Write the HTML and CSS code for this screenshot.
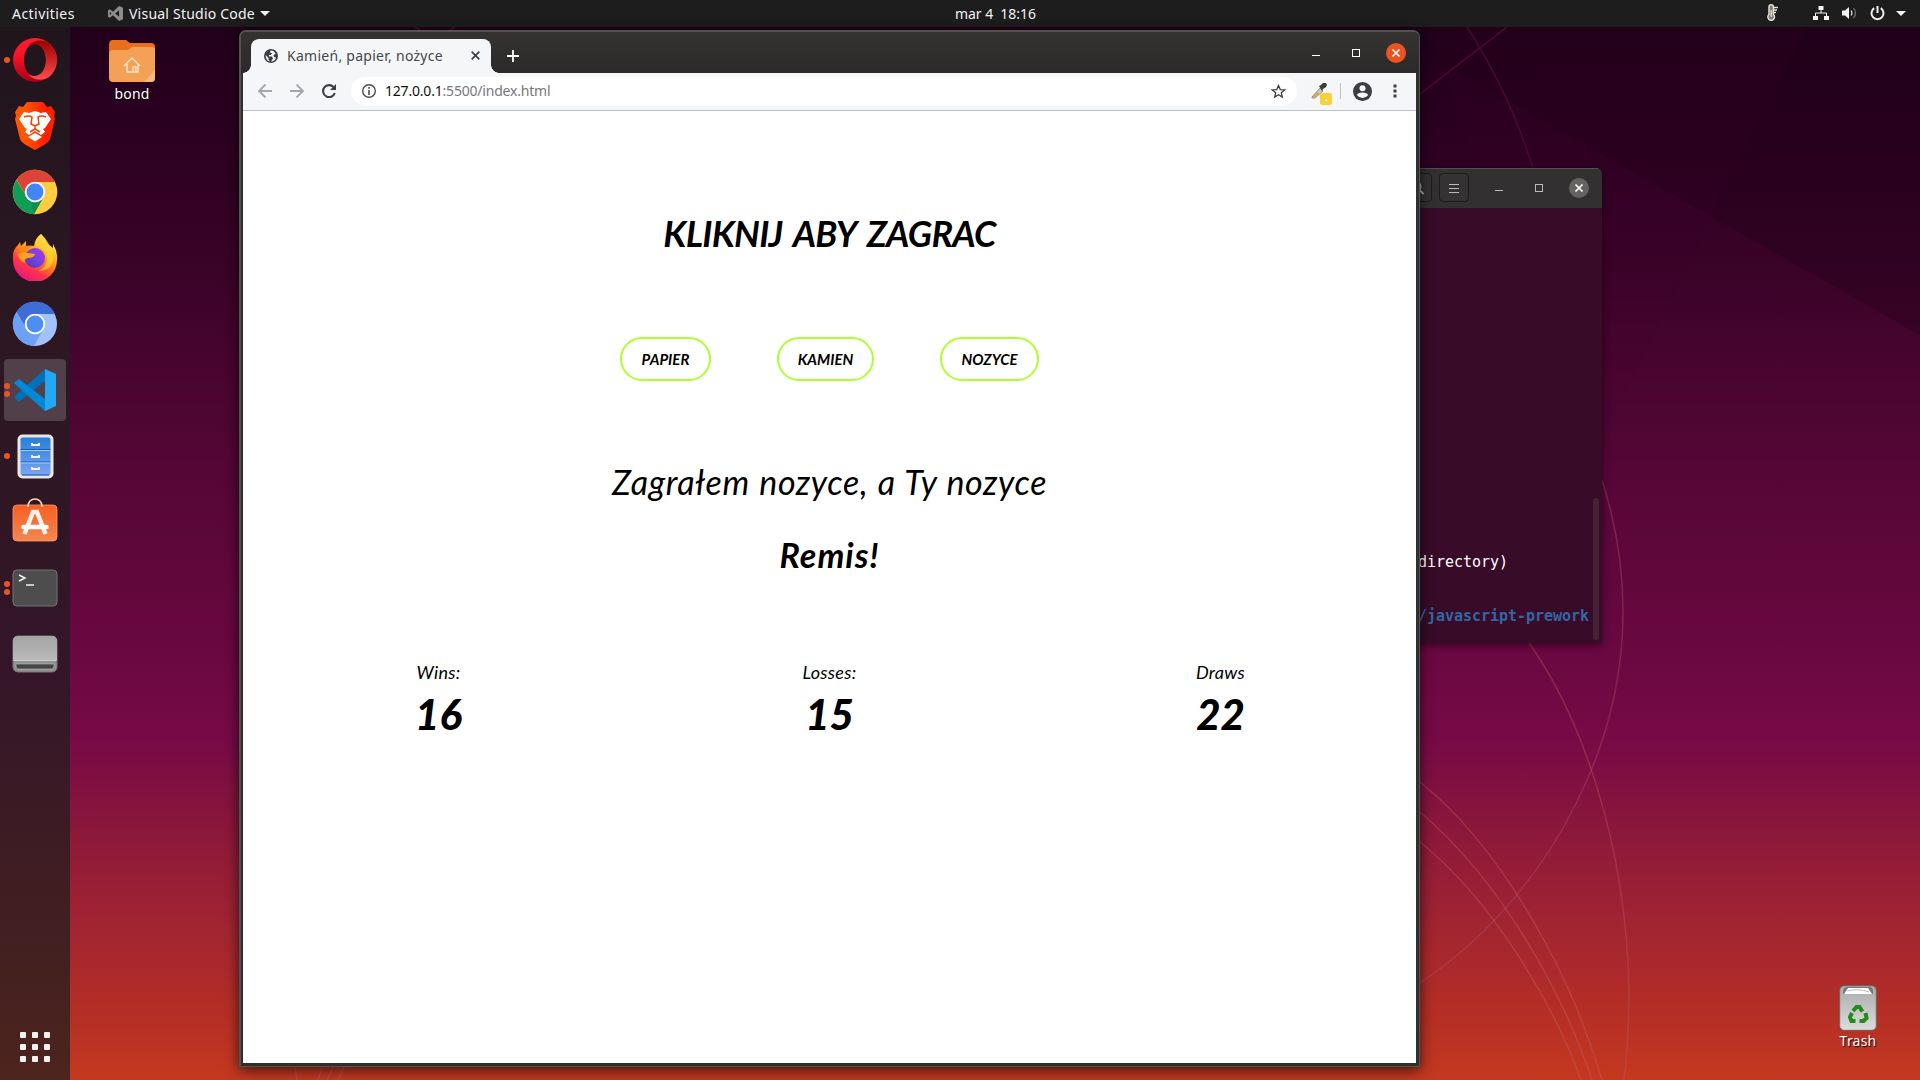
FILE: index.html
```html
<!DOCTYPE html>
<html lang="pl">
<head>
<meta charset="utf-8">
<title>Kamień, papier, nożyce</title>
<link rel="stylesheet" href="styles.css">
</head>
<body>
<div class="desktop">
  <svg class="wallpaper" viewBox="0 0 1920 1080" aria-hidden="true">
    <path d="M1400 40 1920 335V0H1400Z" fill="#180015" opacity=".25"/>
    <path d="M1820 0 1580 480 1420 0Z" fill="#500535" opacity=".08"/>
    <g fill="none" stroke-width="1.6">
      <path d="M1467 27Q1509 92 1533 168M1507 27 1420 94M415 27l5 3M455 27l-7 4" stroke="#480830"/>
      <path d="M1602 480C1634 580 1629 680 1590 773S1490 936 1420 983" stroke="#b25070" opacity=".36"/>
      <path d="M1529 643C1580 715 1626 840 1629 990Q1629 1038 1624 1080" stroke="#c45560" opacity=".36"/>
      <path d="M1420 782C1500 846 1570 970 1602 1080M1420 812C1500 880 1562 990 1592 1080M1420 842C1490 898 1552 1000 1581 1080M295 1067l2 13M322 1067l-4 13M333 1067l-6 13M344 1067l-6 13" stroke="#c86060" opacity=".36"/>
    </g>
  </svg>

  <header class="topbar">
    <span class="activities">Activities</span>
    <div class="appmenu">
      <svg width="15" height="15" viewBox="0 0 42 42"><path d="M31 0 42 5V37L31 42 14 26 5 33 0 30V12L5 9 14 16ZM31 12 20 21 31 30ZM5 16v10l5-5Z" fill="#8d8d8d" fill-rule="evenodd"/></svg>
      <span class="appname">Visual Studio Code</span><i class="caret"></i>
    </div>
    <span class="clock">mar 4&nbsp; 18:16</span>
    <div class="tray">
      <svg width="11" height="18" viewBox="0 0 11 18"><path d="M2 3a2.200 2.200 0 0 1 4.400 0v7.500a3.300 3.300 0 1 1-4.400 0Z" fill="#777" stroke="#e6e0d4" stroke-width="1.500"/><path d="M7 3.500h4M7 6h3M7 8.500h2M4.200 6v7" stroke="#e6e0d4" stroke-width="1.300"/></svg>
      <svg class="net" width="16" height="14" viewBox="0 0 16 14"><path d="M5.500 0h5v4h-5zM0 10h5v4H0zM11 10h5v4h-5z" fill="#f2f2f2"/><path d="M8 4v3M2.500 10V7h11v3" fill="none" stroke="#f2f2f2"/></svg>
      <svg class="vol" width="15" height="14" viewBox="0 0 15 14"><path d="M0 4.500h3L7 1v12L3 9.500H0Z" fill="#f2f2f2"/><path d="M9 4.500q2 2.500 0 5" fill="none" stroke="#ddd" stroke-width="1.200"/><path d="M11.500 2q4 5 0 10" fill="none" stroke="#777" stroke-width="1.200"/></svg>
      <svg class="pow" width="15" height="15" viewBox="0 0 15 15"><path d="M4.200 2.200a6 6 0 1 0 6.600 0" fill="none" stroke="#f2f2f2" stroke-width="2"/><path d="M7.500 0v7" stroke="#f2f2f2" stroke-width="2"/></svg>
      <i class="caret"></i>
    </div>
  </header>

  <nav class="dock">
    <div class="app one"><svg width="46" height="46" viewBox="0 0 46 46"><defs><linearGradient id="o1" x2="0" y2="1"><stop stop-color="#ff1b2d"/><stop offset=".4" stop-color="#f5142a"/><stop offset="1" stop-color="#a50014"/></linearGradient><linearGradient id="o2" x2="0" y2="1"><stop stop-color="#9c0000"/><stop offset="1" stop-color="#ff4b4b"/></linearGradient></defs><path d="M23 1a22 22 0 1 0 0 44A22 22 0 0 0 23 1Zm0 6c7 0 11 7 11 16s-4 16-11 16S12 32 12 23 16 7 23 7Z" fill="url(#o1)" fill-rule="evenodd"/><path d="M16 9c9-6 18 2 18 14s-9 20-18 14c4 5 12 8 21 3a22 22 0 0 0 0-34C28 1 20 4 16 9Z" fill="url(#o2)"/></svg></div>
    <div class="app"><svg width="42" height="48" viewBox="0 0 42 48"><defs><linearGradient id="br"><stop offset=".25" stop-color="#ff5500"/><stop offset=".75" stop-color="#ff2000"/></linearGradient></defs><path d="M13 0h16l4 5 4-1 4 6-1 4 1 3-5 20q-1 3-6 6l-9 5-9-5q-5-3-6-6L1 17l1-3-1-4 4-6 4 1Z" fill="url(#br)"/><path d="m10 10 5 1 6-2 6 2 5-1 5 7-6 9-2 1 2 3-4 3-6-4-6 4-4-3 2-3-2-1-6-9Z" fill="#fff"/><path d="m21 31 7 4-7 4.500-7-4.500Z" fill="#fff"/><path d="M10 15q5-2 8 0l-1 7 4 2 4-2-1-7q3-2 8 0M21 24v3l-5 3M21 27l5 3" fill="none" stroke="#ff3d00" stroke-width="1.500"/></svg></div>
    <div class="app"><svg width="46" height="46" viewBox="0 0 46 46"><circle cx="23" cy="23" r="22.300" fill="#ffcd40"/><path d="M23 13H43A22.300 22.300 0 0 0 4.500 10.500L14 27Z" fill="#db4437"/><path d="M4.500 11A22.300 22.300 0 0 0 22 45.300L31 29 14 27Z" fill="#0f9d58"/><path d="m22 45.300 10-18-5 5-8 1Z" fill="#0b8048" opacity=".5"/><circle cx="23" cy="23" r="10.300" fill="#f4f6fa"/><circle cx="23" cy="23" r="8.400" fill="#4285f4"/></svg></div>
    <div class="app firefox"><svg width="46" height="48" viewBox="0 0 46 48"><defs><linearGradient id="f1" x1=".8" y1=".1" x2=".3" y2="1"><stop stop-color="#fff44f"/><stop offset=".4" stop-color="#ff980e"/><stop offset=".7" stop-color="#ff3647"/><stop offset="1" stop-color="#e31587"/></linearGradient><linearGradient id="f2" x1="1" x2="0" y2="1"><stop stop-color="#b833e1"/><stop offset=".5" stop-color="#7542e5"/><stop offset="1" stop-color="#4a3a9a"/></linearGradient></defs><path d="M29 1q5 5 7 10l5 4v-4q5 8 4 16A22 22 0 0 1 1 27Q0 17 6 12l2-3 1 4 5-5v5l8 0Q23 5 29 1Z" fill="url(#f1)"/><path d="M23 13q-6 0-8 5h-8q6-7 15-5Z" fill="#ff8a16"/><circle cx="23" cy="25" r="10" fill="url(#f2)"/><path d="M6 21q5-3 10-1l7 1q-1 4-7 4-5 1-3 5Q7 28 6 21Z" fill="#ffa21d"/><path d="M27 15q9 3 8 13-1 7-9 10 17-1 15-17Q37 8 29 1q-5 6-6 12 4 0 5 4Z" fill="#ffd33b" opacity=".7"/></svg></div>
    <div class="app"><svg width="46" height="46" viewBox="0 0 46 46"><circle cx="23" cy="23" r="22" fill="#a1c2fa"/><path d="M23 13H43A22 22 0 0 0 4.500 11L14 27Z" fill="#3f6dd6"/><path d="M4.500 11A22 22 0 0 0 22 45L31 29 14 27Z" fill="#6da1f8"/><circle cx="23" cy="23" r="10.300" fill="#fff"/><circle cx="23" cy="23" r="8.400" fill="#4c8df6"/></svg></div>
    <div class="app two active"><svg width="42" height="42" viewBox="0 0 42 42"><path d="M31 0V12L5 33 0 28Z" fill="#0070ba"/><path d="M5 10 31 30V42L0 14Z" fill="#0089d8"/><path d="M31 0 42 5V37L31 42Z" fill="#25a8f3"/></svg></div>
    <div class="app one"><svg width="37" height="45" viewBox="0 0 37 45"><defs><linearGradient id="fi" x2="0" y2="1"><stop stop-color="#267fd8"/><stop offset="1" stop-color="#7da4f6"/></linearGradient></defs><rect x=".5" y=".5" width="36" height="44" rx="5" fill="#e9e7df"/><rect x="3.500" y="3.500" width="30" height="38" rx="2" fill="url(#fi)"/><path d="M3.500 15.500h30M3.500 28h30M5 41h27" stroke="#175aa8"/><path d="M3.500 16.500h30M3.500 29h30" stroke="#a3cdf6"/><path d="M15 9v2h7V9M15 21v2h7v-2M15 33v2h7v-2" fill="none" stroke="#f4f0e9" stroke-width="2"/></svg></div>
    <div class="app store"><svg width="46" height="46" viewBox="0 0 46 46"><defs><linearGradient id="st" x2="0" y2="1"><stop stop-color="#f66023"/><stop offset="1" stop-color="#f48650"/></linearGradient></defs><rect x="1" y="9" width="44" height="36" rx="4" fill="url(#st)" stroke="#ff9a69" stroke-width=".8"/><path d="M16 11V10q1-7 7-7t7 7v1" fill="none" stroke="#f8d9a6" stroke-width="1.700"/><path d="m12.500 38 8.500-22h4l8.500 22" fill="none" stroke="#fff0e8" stroke-width="4.500"/><path d="M11.500 31h23" stroke="#fff" stroke-width="4.500" stroke-linecap="round"/></svg></div>
    <div class="app two"><svg width="46" height="38" viewBox="0 0 46 38"><rect x="1" y="1" width="44" height="36" rx="4" fill="#4d4d4d" stroke="#737373"/><path d="m7 6 6 3-6 3M14 16h8" fill="none" stroke="#f2f2f2" stroke-width="1.500"/></svg></div>
    <div class="app"><svg width="46" height="38" viewBox="0 0 46 38"><defs><linearGradient id="di" x2="0" y2="1"><stop stop-color="#a3a3a3"/><stop offset="1" stop-color="#bababa"/></linearGradient></defs><rect x="1" y="1" width="44" height="36" rx="5" fill="#929292" stroke="#747474"/><path d="M1 25V6q0-5 5-5h34q5 0 5 5v19Z" fill="url(#di)"/><path d="M1.500 25.500h43" stroke="#ccc"/><path d="M4 29h38v2q0 3-2 3H6q-2 0-2-3Z" fill="#464646" stroke="#bbb" stroke-width=".6"/></svg></div>
    <div class="grid"><i></i><i></i><i></i><i></i><i></i><i></i><i></i><i></i><i></i></div>
  </nav>

  <div class="shortcut home">
    <svg width="46" height="42" viewBox="0 0 46 42"><path d="M0 5q0-5 4-5h13l4 3h21q4 0 4 4v8H0Z" fill="#e96f1f"/><path d="M0 14q0-3 3-4h16l4-3h20q3 0 3 3v28q0 4-4 4H4q-4 0-4-4Z" fill="#f4a055"/><path d="M35 42 46 30v8q0 4-4 4Z" fill="#f8b77d"/><path d="m15 26 8-8 8 8M18 24v8h11v-8M24 32v-5h3v5" fill="none" stroke="#ffe7d0" stroke-width="1.300"/></svg>
    <span>bond</span>
  </div>
  <div class="shortcut trash">
    <svg width="38" height="46" viewBox="0 0 38 46"><defs><linearGradient id="tr" x2="0" y2="1"><stop stop-color="#aaa"/><stop offset="1" stop-color="#dcdcdc"/></linearGradient></defs><rect x=".7" y=".7" width="36.600" height="44.600" rx="4.500" fill="url(#tr)" stroke="#686460"/><path d="M4 9V6q1-4 4-4h22q4 0 4 4v3Z" fill="#777"/><path d="m5 9 4-6h20l4 6Z" fill="#fff"/><path d="M8 6q11-3 22 1" fill="none" stroke="#bbb"/><g fill="none" stroke="#248a1b" stroke-width="4"><path d="m14 26 3.500-4h3l3 4.500M26.500 28l1 5-3 3h-4M16.500 36h-4l-1.500-4 2-4"/></g></svg>
    <span>Trash</span>
  </div>

  <section class="terminal">
    <div class="thead">
      <div class="tbtn"><svg width="16" height="16" viewBox="0 0 16 16"><circle cx="7" cy="6.500" r="4.800" fill="none" stroke="#aaa" stroke-width="1.400"/><path d="m10.500 10 4 4" stroke="#aaa" stroke-width="1.800"/></svg></div>
      <div class="tbtn"><svg width="10" height="10" viewBox="0 0 10 10"><path d="M0 1.500h10M0 5.500h10M0 9.500h10" stroke="#bbb"/></svg></div>
      <i class="tmin"></i><i class="tmax"></i>
      <svg class="tclose" width="20" height="20" viewBox="0 0 20 20"><circle cx="10" cy="10" r="10" fill="#646362"/><path d="m6.500 6.500 7 7m0-7-7 7" stroke="#fff" stroke-width="1.700"/></svg>
    </div>
    <div class="tbody">
      <div class="tlines"><div>directory)</div><div></div><div></div><div class="path">/javascript-prework</div></div>
      <i class="tscroll"></i>
    </div>
  </section>

  <section class="browser">
    <div class="strip">
      <div class="tab">
        <svg width="14" height="14" viewBox="0 0 14 14"><circle cx="7" cy="7" r="7" fill="#3c3d40"/><path d="M7 1.500q-2 1.500 0 2.500l1.500.500-2 1.500-1.500 0v1.500h3l1 2-2 3q4 0 5-4l-2-.500-.500-2 2-1Q10.500 1.500 7 1.500ZM1.600 6l2.900 3v1.500l1.500 2Q1.500 11.500 1.600 6Z" fill="#f4f6f8"/></svg>
        <span class="title">Kamień, papier, nożyce</span>
        <svg width="9" height="9" viewBox="0 0 9 9"><path d="m.7.7 7.600 7.600m0-7.600L.7 8.300" stroke="#3c4043" stroke-width="1.700"/></svg>
      </div>
      <svg class="plus" width="12" height="12" viewBox="0 0 12 12"><path d="M6 0v12M0 6h12" stroke="#fff" stroke-width="1.800"/></svg>
      <i class="min"></i><i class="max"></i>
      <svg width="20" height="20" viewBox="0 0 20 20"><circle cx="10" cy="10" r="10" fill="#e95420"/><path d="m6.500 6.500 7 7m0-7-7 7" stroke="#fff" stroke-width="1.600"/></svg>
    </div>
    <div class="toolbar">
      <svg width="14" height="14" viewBox="0 0 14 14"><path d="M14 7H1M7.500.500 1 7l6.500 6.500" fill="none" stroke="#a3a5a8" stroke-width="1.800"/></svg>
      <svg width="14" height="14" viewBox="0 0 14 14"><path d="M0 7h13M6.500.500 13 7l-6.500 6.500" fill="none" stroke="#a3a5a8" stroke-width="1.800"/></svg>
      <svg width="14" height="14" viewBox="0 0 14 14"><path d="M11.500 3A6 6 0 1 0 12.800 9" fill="none" stroke="#3c4043" stroke-width="2.100"/><path d="M14 0v6H8Z" fill="#3c4043"/></svg>
      <div class="omnibox">
        <svg width="14" height="14" viewBox="0 0 14 14"><circle cx="7" cy="7" r="6.300" fill="none" stroke="#4a4c50" stroke-width="1.400"/><path d="M7 6v5M7 3v1.700" stroke="#4a4c50" stroke-width="1.600"/></svg>
        <span class="url"><b>127.0.0.1</b>:5500/index.html</span>
        <svg width="15" height="15" viewBox="0 0 16 16"><path d="m8 1.600 1.900 4.300 4.700.400-3.600 3.100 1.100 4.600L8 11.500 3.900 14 5 9.400 1.400 6.300l4.700-.400Z" fill="none" stroke="#3c4043" stroke-width="1.400"/></svg>
      </div>
      <svg class="picker" width="22" height="24" viewBox="0 0 22 24"><path d="M2 16 10 7l3 3-8 7H2Z" fill="#c9c9c0" stroke="#888" stroke-width=".9"/><path d="m3 15 4-4 2 1-4 4H3Z" fill="#dfaa26"/><path d="m9 5 2-1 2-2h3l1 2-1 2-3 2-1 2Z" fill="#3b3b3b"/><rect x="10" y="12" width="12" height="12" rx="2" fill="#f8d13a"/><path d="M15.200 18.500h2v1.500h-2z" fill="#fff"/></svg>
      <i class="sep"></i>
      <svg class="user" width="19" height="19" viewBox="0 0 19 19"><circle cx="9.500" cy="9.500" r="9.500" fill="#3c3d40"/><circle cx="9.500" cy="6.300" r="3" fill="#f4f6f8"/><path d="M3.800 13q1-2.600 5.700-2.600T15.200 13Q13 16 9.500 16T3.800 13Z" fill="#f4f6f8"/></svg>
      <svg width="4" height="14" viewBox="0 0 4 14"><path d="M.5.500h3v3h-3zM.5 5.500h3v3h-3zM.5 10.500h3v3h-3z" fill="#3c4043"/></svg>
    </div>
    <main class="page">
      <h1>KLIKNIJ ABY ZAGRAC</h1>
      <div class="choices"><button class="b1">PAPIER</button><button class="b2">KAMIEN</button><button class="b3">NOZYCE</button></div>
      <p class="played">Zagrałem nozyce, a Ty nozyce</p>
      <p class="outcome">Remis!</p>
      <div class="score">
        <div><span>Wins:</span><b>16</b></div>
        <div><span>Losses:</span><b>15</b></div>
        <div><span>Draws</span><b>22</b></div>
      </div>
    </main>
  </section>
</div>
</body>
</html>
```
FILE: styles.css
```css
* { box-sizing: border-box; }
body { margin: 0; font-family: "Noto Sans", sans-serif; }
svg { display: block; flex: none; }
i { display: block; flex: none; }
.desktop {
  position: relative; width: 1920px; height: 1080px; overflow: hidden;
  background: linear-gradient(#22001b 27px, #2a0020 120px, #3a0328 270px, #4c0531 400px, #5d073a 540px, #690841 650px, #770a46 740px, #8c183a 835px, #a12431 925px, #b52e26 1010px, #c33920 1080px);
}
.wallpaper { position: absolute; inset: 0; width: 1920px; height: 1080px; }

.topbar {
  position: relative; height: 27px; padding: 0 15px 1px 12px; display: flex; align-items: center;
  background: #1d1d1d; color: #f2f2f2; font-size: 14px;
}
.activities { width: 96px; letter-spacing: .45px; }
.appmenu { display: flex; align-items: center; flex: 1; }
.appname { margin-left: 6px; letter-spacing: .22px; }
.caret { border: 5px solid transparent; border-top-color: #f2f2f2; border-bottom: 0; margin-left: 5px; }
.clock { position: absolute; left: 955px; font-size: 14px; letter-spacing: -.05px; }
.tray { display: flex; align-items: center; margin-right: -1px; }
.tray .net { margin-left: 35px; }
.tray .vol { margin-left: 13px; }
.tray .pow { margin-left: 13px; }
.tray .caret { margin-left: 11px; }

.dock {
  position: absolute; left: 0; top: 27px; width: 70px; height: 1053px;
  display: flex; flex-direction: column; gap: 4px; padding: 2px 4px 18px;
  background: linear-gradient(#21151c, #2c1722 310px, #341628 650px, #45211f 960px, #4e241e);
}
.app { position: relative; width: 62px; height: 62px; display: flex; align-items: center; justify-content: center; border-radius: 4px; }
.app.active { background: #514049; }
.app.firefox { padding-bottom: 3px; }
.app.store { padding-bottom: 6px; }
.app.one::before, .app.two::before, .app.two::after {
  content: ""; position: absolute; left: 0; top: 28px; width: 6px; height: 6px; border-radius: 50%; background: #e95420;
}
.app.two::before { top: 24px; }
.app.two::after { top: 32px; }
.grid { margin: auto auto 0; display: grid; grid-template-columns: repeat(3, 6px); gap: 6px; }
.grid i { width: 6px; height: 6px; border-radius: 1px; background: #f2f2f2; }

.shortcut { position: absolute; display: flex; flex-direction: column; align-items: center; color: #fff; font-size: 14px; line-height: 18px; text-shadow: 1px 1px 1px #000; width: 80px; }
.home { left: 92px; top: 40px; }
.home span { margin-top: 3px; letter-spacing: .2px; }
.trash { left: 1818px; top: 985px; }
.trash span { margin-top: 1px; letter-spacing: .2px; }

.terminal {
  position: absolute; left: 1390px; top: 168px; width: 212px; height: 475px; display: flex; flex-direction: column;
  border-radius: 6px 6px 0 0; overflow: hidden; background: #380c28; box-shadow: 0 2px 7px #0008;
}
.thead { height: 40px; padding: 0 13px 2px 0; display: flex; align-items: center; justify-content: flex-end; background: #323030; border-top: 1px solid #535150; }
.tbtn { width: 30px; height: 29px; margin-right: 7px; border: 1px solid #1d1b1b; border-radius: 4px; display: flex; align-items: center; justify-content: center; background: #343232; }
.tmin { width: 8px; height: 1px; background: #bbb; margin: 6px 32px 0 19px; }
.tmax { width: 8px; height: 8px; border: 1px solid #bbb; margin-right: 26px; }
.tbody { flex: 1; display: flex; justify-content: space-between; padding: 290px 3px 3px 28px; }
.tlines { padding-top: 55px; font: 15px/18px "DejaVu Sans Mono", monospace; color: #fff; margin-right: -10px; white-space: pre; letter-spacing: -.03px; }
.tlines div { height: 18px; }
.tlines .path { color: #3465a4; font-weight: bold; }
.tscroll { width: 6px; background: #482038; border-radius: 3px; }

.browser {
  position: absolute; left: 239px; top: 30px; width: 1181px; height: 1037px; display: flex; flex-direction: column;
  padding: 0 3px 3px 2px; background: #2f2f2d; border: 1px solid #555351; border-top-width: 2px; border-left-width: 2px;
  border-radius: 7px 7px 0 0; box-shadow: 0 3px 14px #000a;
}
.strip { height: 41px; margin: 0 -3px 0 -2px; padding: 0 13px 0 10px; display: flex; align-items: center; background: linear-gradient(#353331, #2c2a2a); border-radius: 5px 5px 0 0; }
.tab { position: relative; align-self: flex-end; width: 240px; height: 34px; padding: 0 11px 1px 13px; display: flex; align-items: center; background: #f4f6f8; border-radius: 8px 8px 0 0; }
.tab::before, .tab::after { content: ""; position: absolute; bottom: 0; width: 8px; height: 8px; }
.tab::before { left: -8px; background: radial-gradient(circle at 0 0, transparent 7.5px, #f4f6f8 8px); }
.tab::after { right: -8px; background: radial-gradient(circle at 100% 0, transparent 7.5px, #f4f6f8 8px); }
.title { margin: -1px 0 0 9px; flex: 1; font-size: 14px; color: #45484c; white-space: nowrap; letter-spacing: .27px; }
.plus { margin: 6px auto 0 16px; }
.min { width: 8px; height: 1px; background: #fff; margin: 6px 32px 0 0; }
.max { width: 8px; height: 8px; border: 1px solid #fff; margin-right: 26px; }
.toolbar { height: 38px; display: flex; align-items: center; padding: 0 19px 1px 15px; background: #f4f6f8; border-bottom: 1px solid #b9c0c5; gap: 18px; }
.omnibox { flex: 1; height: 28px; margin-left: -3px; padding: 0 11px; display: flex; align-items: center; background: #fff; border-radius: 14px; }
.url { flex: 1; margin: -1px 0 0 9px; font-size: 14px; color: #75787c; letter-spacing: -.2px; }
.url b { font-weight: 400; color: #111; }
.picker { margin: 4px 0 0 -5px; }
.sep { width: 1px; height: 16px; background: #c0c4c9; margin: 0 -6px 0 -10px; }
.user { margin-right: 3px; }

.page { flex: 1; background: #fff; color: #000; font-family: Lato, sans-serif; font-style: italic; text-align: center; display: flex; flex-direction: column; align-items: center; }
.page h1, .page p { margin: 0; white-space: nowrap; }
.page h1 { margin-top: 97px; font-size: 36px; line-height: 50px; font-weight: 700; letter-spacing: -.75px; word-spacing: 4px; }
.choices { display: flex; gap: 66px; margin-top: 79px; }
.choices button { height: 44px; padding: 0 0 1px; font: italic 700 15px Lato, sans-serif; color: #000; background: #fff; border: 2px solid #adff2f; border-radius: 22px; }
.b1 { width: 91px; }
.b2 { width: 97px; }
.b3 { width: 99px; }
.page .played { margin-top: 76px; font-size: 34px; line-height: 50px; letter-spacing: .6px; word-spacing: 1px; }
.page .outcome { margin-top: 23px; font-size: 34px; line-height: 50px; font-weight: 700; letter-spacing: 1px; }
.score { align-self: stretch; display: grid; grid-template-columns: repeat(3, 1fr); margin-top: 80px; }
.score div { display: flex; flex-direction: column; align-items: center; }
.score span { font-size: 18px; line-height: 24px; letter-spacing: .3px; }
.score b { margin-top: 2px; font-size: 42px; line-height: 56px; font-weight: 900; }
```
